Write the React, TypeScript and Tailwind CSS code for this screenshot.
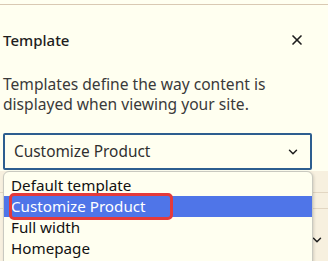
import { ChevronDown, X } from "lucide-react";

const OPTIONS = ["Default template", "Customize Product", "Full width", "Homepage"];

export default function App() {
  const selected = "Customize Product";

  return (
    <div
      className="relative w-[328px] h-[261px] overflow-hidden bg-[#fffff0] text-[#1e1e1e]"
      style={{ fontFamily: '"Noto Sans", "Open Sans", sans-serif' }}
    >
      <div className="h-[4px]" />
      <div className="border-t border-[#d9c9b3]" />

      <div className="flex items-center justify-between pl-[3px] pr-[23px] pt-[25px]">
        <h2 className="text-[15px] font-medium leading-[20px]">Template</h2>
        <button className="text-[#1e1e1e]" aria-label="Close">
          <X size={16} strokeWidth={2.5} />
        </button>
      </div>

      <p className="w-[280px] pl-[3px] pt-[24px] text-[15.6px] leading-[20px] text-[#3a3a3a]">
        Templates define the way content is displayed when viewing your site.
      </p>

      <div className="ml-[3px] mt-[19px] flex h-[37px] w-[309px] items-center justify-between rounded-[2px] border-2 border-[#2d5e8f] pl-[9px] pr-[10px]">
        <span className="text-[15.4px] text-[#2f2f2f]">{selected}</span>
        <ChevronDown size={14} strokeWidth={2.5} className="text-[#1e1e1e]" />
      </div>

      {/* page content peeking out behind the open list */}
      <div className="mt-px h-[200px] bg-[#f7f0df]">
        <div className="h-[21px]" />
        <div className="border-t border-[#e2d6c2]" />
        <div className="h-[15px]" />
        <div className="border-t border-[#e2d6c2]" />
        <div className="flex justify-end pr-[4px] pt-[24px]">
          <ChevronDown size={14} strokeWidth={2.5} className="text-[#1e1e1e]" />
        </div>
      </div>

      <ul className="absolute left-[3px] top-[171px] w-[310px] h-[100px] rounded-[6px] border border-[#c9c9c0] bg-[#fffff0] py-[3px] shadow-[1px_1px_3px_rgba(0,0,0,0.15)]">
        {OPTIONS.map((o) => (
          <li
            key={o}
            className={`h-[21px] pl-[7px] text-[15.2px] leading-[21px] ${
              o === selected ? "bg-[#4f75e8] text-white" : "text-[#111]"
            }`}
          >
            {o}
          </li>
        ))}
      </ul>

      <div className="absolute left-[9px] top-[193px] h-[27px] w-[164px] rounded-[5px] border-[3px] border-[#e53a3a]" />
    </div>
  );
}
